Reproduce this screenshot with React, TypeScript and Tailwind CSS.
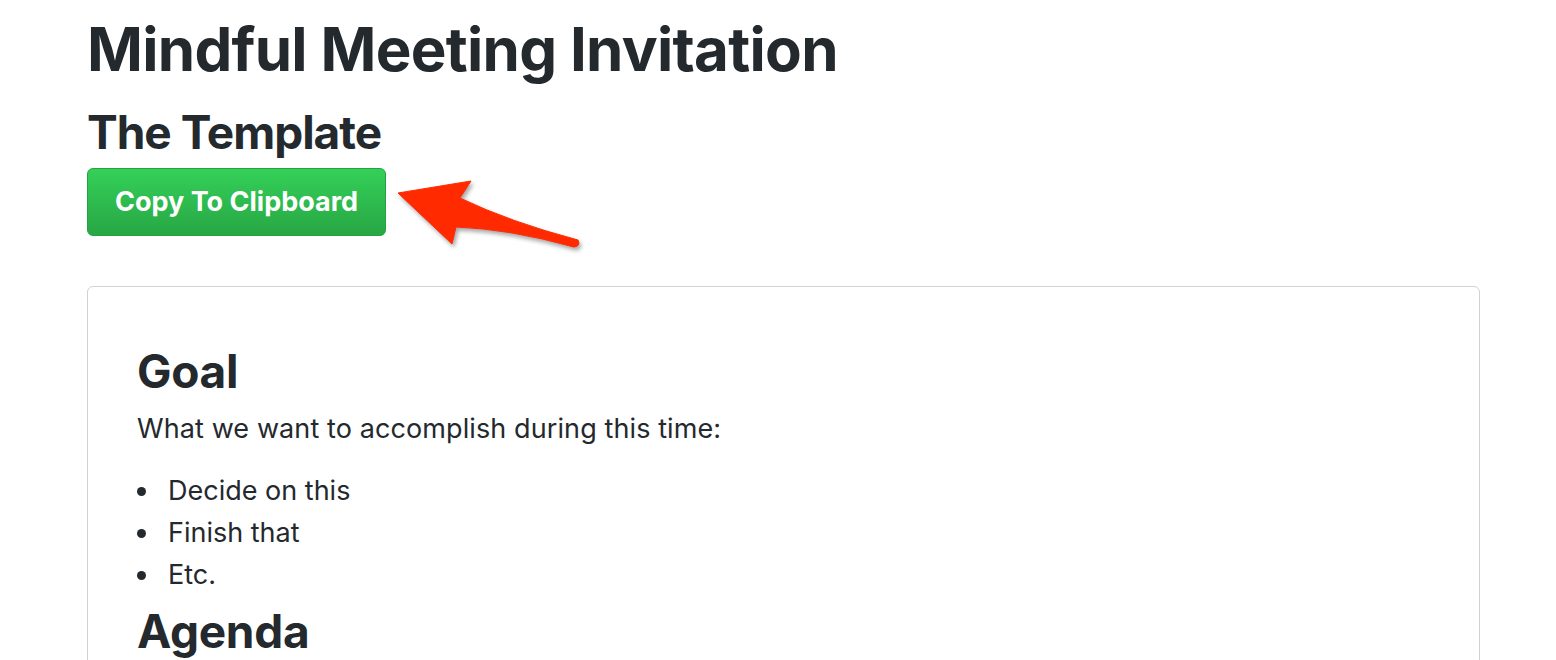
import React from 'react';

const goals = ['Decide on this', 'Finish that', 'Etc.'];

// Red callout arrow pointing at the copy button
const Arrow = () => (
  <svg
    className="absolute left-[380px] top-[160px] drop-shadow-[2px_3px_2px_rgba(0,0,0,0.35)]"
    width="220"
    height="100"
    viewBox="0 0 220 100"
  >
    <path
      d="M18 33 L91 21 L80 38 Q130 62 198 80 Q201 86 194 87 Q130 69 76 67 L72 84 Z"
      fill="#ff2a00"
      stroke="#ff2a00"
      strokeWidth="1"
      strokeLinejoin="round"
    />
  </svg>
);

export default function App() {
  return (
    <div className="relative min-h-screen bg-white text-[#24292e] font-['Inter','Liberation_Sans',sans-serif] overflow-hidden">
      <div className="pl-[87px] pr-[76px] pt-[13px]">
        <h1 className="text-[60px] leading-[72px] font-bold tracking-[-0.7px]">Mindful Meeting Invitation</h1>
        <h2 className="mt-[19px] text-[46px] leading-[56px] font-bold tracking-[-1px]">The Template</h2>

        <button className="mt-[8px] w-[299px] h-[68px] rounded-[6px] border border-[#23a340] bg-gradient-to-b from-[#34d058] to-[#28a745] text-white text-[27px] font-bold">
          Copy To Clipboard
        </button>

        {/* Template body */}
        <div className="mt-[50px] border border-[#cfd3d8] rounded-[6px] pl-[49px] pt-[56px] pb-[40px]">
          <h2 className="text-[46px] leading-[56px] font-bold tracking-[-0.3px]">Goal</h2>
          <p className="mt-[12px] text-[27px] leading-[36px] tracking-[0.1px]">What we want to accomplish during this time:</p>
          <ul className="mt-[23px] text-[27px] leading-[42px]">
            {goals.map(g => (
              <li key={g} className="flex items-center">
                <span className="w-[9px] h-[9px] mr-[22px] rounded-full bg-[#24292e] shrink-0" />
                {g}
              </li>
            ))}
          </ul>
          <h2 className="mt-[7px] text-[46px] leading-[56px] font-bold tracking-[-0.3px]">Agenda</h2>
        </div>
      </div>
      <Arrow />
    </div>
  );
}
